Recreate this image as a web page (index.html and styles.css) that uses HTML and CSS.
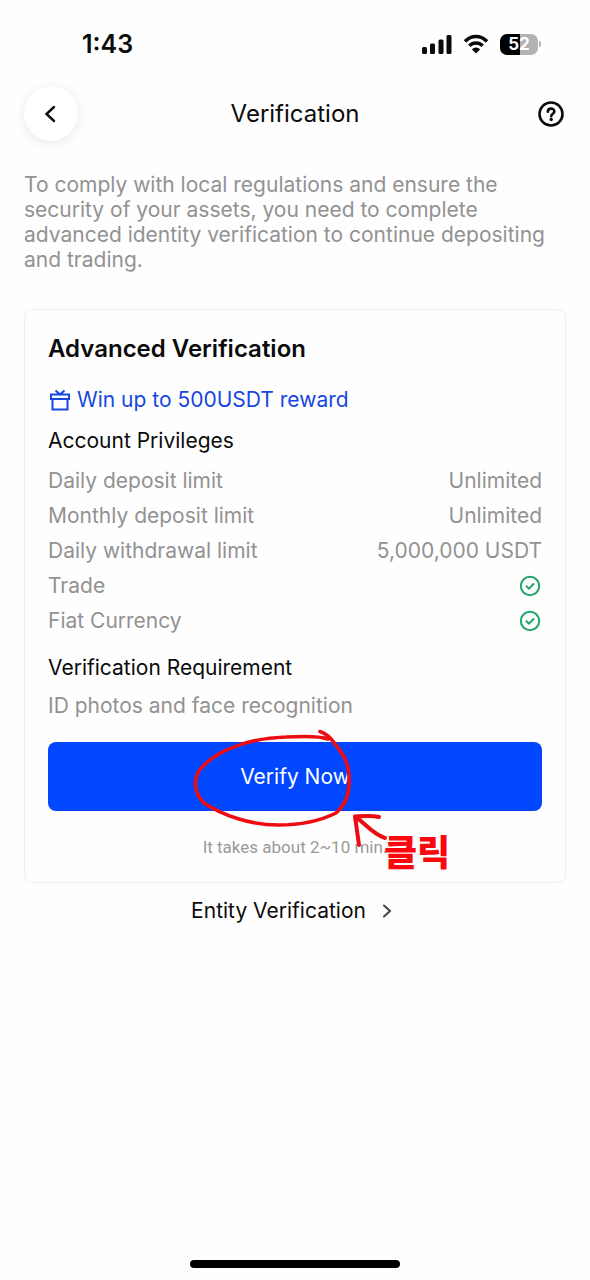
FILE: index.html
```html
<!DOCTYPE html>
<html lang="en">
<head>
<meta charset="utf-8">
<meta name="viewport" content="width=device-width, initial-scale=1">
<title>Verification</title>
<link rel="stylesheet" href="styles.css">
</head>
<body>
<div class="screen">
  <div class="status">
    <time class="status-time">1:43</time>
    <div class="status-icons">
      <svg class="signal" viewBox="0 0 30 20" aria-hidden="true"><rect x="0" y="13" width="5" height="7" rx="1.5"/><rect x="8" y="9.500" width="5" height="10.500" rx="1.500"/><rect x="16.500" y="5.500" width="5" height="14.500" rx="1.500"/><rect x="24.500" y="1" width="5" height="19" rx="1.500"/></svg>
      <svg class="wifi" viewBox="0 0 26 20" aria-hidden="true"><path d="M2 7.500C8 .8 18 .8 24 7.500" stroke-width="3.600"/><path d="M6.300 11.800C10 8 16 8 19.700 11.800" stroke-width="3.400"/><path class="wifi-dot" d="M8.800 15.300Q13 11.800 17.200 15.300L13 19.500Z"/></svg>
      <div class="battery"><span class="battery-level">5<i>2</i></span><span class="battery-tip"></span></div>
    </div>
  </div>

  <header class="header">
    <button class="back" type="button" aria-label="Back"><svg viewBox="0 0 20 20" aria-hidden="true"><path d="M13 3 5.500 10l7.500 7"/></svg></button>
    <h1 class="title">Verification</h1>
    <button class="help" type="button" aria-label="Help"><svg viewBox="0 0 26 26" aria-hidden="true"><circle cx="13" cy="13" r="11.500"/><path d="M9.800 10.800C9.800 6.600 16.300 6.600 16.300 10.500C16.300 12.700 13.200 12.700 13.200 15.200"/><circle class="help-dot" cx="13.200" cy="18.500" r="1.700"/></svg></button>
  </header>

  <main class="content">
    <p class="intro">To comply with local regulations and ensure the security of your assets, you need to complete advanced identity verification to continue depositing and trading.</p>

    <section class="card">
      <h2 class="card-title">Advanced Verification</h2>
      <a class="reward" href="#reward"><svg viewBox="0 0 22 24" aria-hidden="true"><path d="M2 6.500H20V11H2ZM3.500 11V21.500H18.500V11M6.500 2.500 11 6.500l4.500-4"/></svg>Win up to 500USDT reward</a>
      <h3 class="subtitle">Account Privileges</h3>
      <dl class="limits">
        <div class="limit"><dt>Daily deposit limit</dt><dd>Unlimited</dd></div>
        <div class="limit"><dt>Monthly deposit limit</dt><dd>Unlimited</dd></div>
        <div class="limit"><dt>Daily withdrawal limit</dt><dd>5,000,000 USDT</dd></div>
        <div class="limit"><dt>Trade</dt><dd><svg class="check" viewBox="0 0 22 22" role="img" aria-label="Available"><circle cx="11" cy="11" r="9.200"/><path d="m7.500 11.200 2.500 2.400 4.500-4.600"/></svg></dd></div>
        <div class="limit"><dt>Fiat Currency</dt><dd><svg class="check" viewBox="0 0 22 22" role="img" aria-label="Available"><circle cx="11" cy="11" r="9.200"/><path d="m7.500 11.200 2.500 2.400 4.500-4.600"/></svg></dd></div>
      </dl>
      <h3 class="subtitle">Verification Requirement</h3>
      <p class="requirement">ID photos and face recognition</p>
      <div class="action">
        <button class="verify" type="button">Verify Now</button>
        <p class="note">It takes about 2~10 min.</p>
        <div class="markup">
          <svg class="strokes" viewBox="180 720 280 160" aria-hidden="true">
            <path stroke-width="3.600" d="M320 731.500C327 734 331 738 335 744C344 755 350 764 349 784C349 796 345 805 336 813C320 821 300 825 278 825C250 825 222 815 204 803C192 791 193 775 204 765C218 751 248 738 286 737C304 736 320 736 328 739"/>
            <path stroke-width="4" d="M379 817C371 815 363 816 355 816.500L359 845M355 816.500C364 822 372 834 385 838"/>
          </svg>
          <span class="click" lang="ko">클릭</span>
        </div>
      </div>
    </section>

    <a class="entity" href="#entity">Entity Verification<svg viewBox="0 0 12 16" aria-hidden="true"><path d="m3 2.500 6 5.500-6 5.500"/></svg></a>
  </main>
  <div class="home"></div>
</div>
</body>
</html>
```
FILE: styles.css
```css
* { box-sizing: border-box; }
body { margin: 0; background: #fefefe; color: #0b0b0b; font-family: Inter, "Liberation Sans", sans-serif; }
h1, h2, h3, p, dl, dd { margin: 0; }
button { padding: 0; border: 0; background: none; font: inherit; color: inherit; }
a { text-decoration: none; color: inherit; }
svg { display: block; fill: none; stroke: currentColor; stroke-linecap: round; flex: none; }

.screen { min-height: 100vh; display: flex; flex-direction: column; }
.status { height: 86px; padding: 2px 49px 0 82px; display: flex; align-items: center; justify-content: space-between; }
.status-time { font-size: 25px; font-weight: 600; }
.status-icons { display: flex; align-items: center; gap: 11px; }
.signal { width: 30px; height: 20px; fill: #0b0b0b; stroke: none; }
.wifi { width: 26px; height: 20px; stroke-linecap: butt; }
.wifi-dot { fill: #0b0b0b; stroke: none; }
.battery { display: flex; align-items: center; gap: 1px; }
.battery-level { width: 38px; height: 21px; border-radius: 7px; background: linear-gradient(90deg, #000 52%, #b3b3b3 52%); color: #fff; font-size: 17px; line-height: 21px; font-weight: 700; text-align: center; }
.battery-level i { font-style: normal; }
.battery-tip { width: 2px; height: 6px; border-radius: 0 2px 2px 0; background: #b3b3b3; }

.header { padding: 0 24px; display: grid; grid-template-columns: 54px 1fr 54px; align-items: center; }
.back { width: 54px; height: 55px; border-radius: 50%; background: #fff; box-shadow: 0 2px 12px rgba(0, 0, 0, .09); display: grid; place-items: center; }
.back svg { width: 20px; height: 20px; stroke-width: 2.400; }
.title { font-size: 24px; font-weight: 400; text-align: center; }
.help { justify-self: end; padding-right: 2px; }
.help svg { width: 26px; height: 26px; stroke-width: 2.600; }
.help-dot { fill: #0b0b0b; stroke: none; }

.content { flex: 1; padding: 31px 24px; display: flex; flex-direction: column; }
.intro { color: #929292; font-size: 21px; line-height: 25px; }
.card { margin-top: 37px; border: 1px solid #f0f0f0; border-radius: 8px; padding: 24px 23px; }
.card-title { font-size: 24px; line-height: 30px; font-weight: 600; }
.reward { margin-top: 23px; display: flex; align-items: center; gap: 5px; color: #1746e0; font-size: 21px; line-height: 26px; }
.reward svg { width: 24px; height: 24px; stroke-width: 2; stroke-linecap: butt; }
.subtitle { margin-top: 14px; font-size: 21px; line-height: 28px; font-weight: 400; }
.limits { margin: 9px 0 16px; color: #929292; font-size: 21px; display: grid; gap: 1px; }
.limit { display: flex; justify-content: space-between; align-items: center; min-height: 34px; line-height: 34px; }
.limits + .subtitle { margin-top: 0; }
.check { width: 22px; height: 22px; margin-right: 1px; color: #20a467; stroke-width: 2; }
.requirement { margin-top: 11px; color: #929292; font-size: 21px; line-height: 26px; }
.action { position: relative; margin-top: 23px; }
.verify { display: block; width: 100%; height: 69px; border-radius: 8px; background: #0047ff; color: #fff; font-size: 21px; }
.note { margin-top: 25px; color: #999; font-family: Roboto, sans-serif; font-size: 17px; line-height: 22px; text-align: center; }
.markup { position: absolute; left: 50%; top: -22px; width: 280px; margin-left: -115px; pointer-events: none; }
.strokes { width: 280px; height: 160px; color: #ee0c13; stroke-linejoin: round; }
.click { position: absolute; left: 204px; top: 107px; color: #fa0810; font-family: "Noto Sans CJK KR", sans-serif; font-size: 36px; line-height: 46px; font-weight: 900; white-space: nowrap; }
.entity { margin-top: 15px; padding-right: 6px; align-self: center; display: flex; align-items: center; gap: 15px; font-size: 21px; line-height: 26px; }
.entity svg { width: 12px; height: 16px; stroke-width: 2; color: #444; }
.home { align-self: center; width: 210px; height: 8px; margin-bottom: 12px; border-radius: 4px; background: #000; }
```
